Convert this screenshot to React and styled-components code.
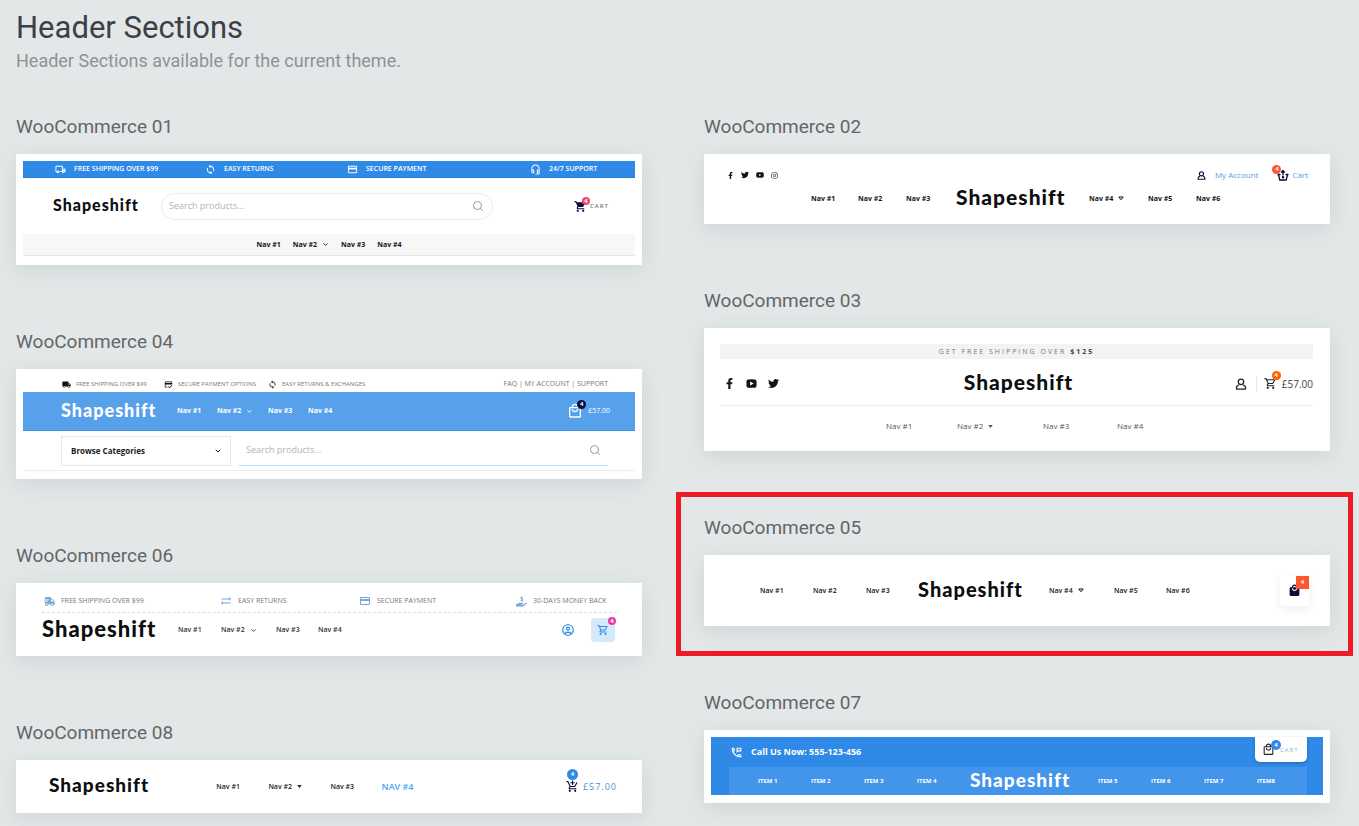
import React from "react";
import styled, { createGlobalStyle, css } from "styled-components";
import {
  MdOutlineLocalShipping, MdLoop, MdCreditCard, MdOutlineHeadsetMic, MdShoppingCart,
  MdOutlineShoppingCart, MdLocalShipping, MdCreditScore, MdOutlineLocalMall, MdLocalMall,
  MdSyncAlt, MdOutlineAccountCircle, MdAddShoppingCart, MdOutlinePermPhoneMsg,
} from "react-icons/md";
import {
  FaFacebookF, FaTwitter, FaYoutube, FaInstagram, FaShippingFast, FaHandHoldingUsd,
} from "react-icons/fa";
import { Search, ChevronDown } from "lucide-react";

const GlobalStyle = createGlobalStyle`
  *, *::before, *::after { box-sizing: border-box; }
  body {
    margin: 0;
    background: #e3e7e8;
    font-family: "Open Sans", "Noto Sans", sans-serif;
    color: #111418;
  }
  svg { display: block; flex: none; }
  a { color: inherit; text-decoration: none; }
  button { font: inherit; color: inherit; background: none; border: 0; padding: 0; cursor: pointer; }
`;

const blue = "#2e8ae6";
const navy = "#0a0a3c";

const Page = styled.main`
  padding: 10px 29px 13px 16px;
`;

const PageTitle = styled.h1`
  margin: 0;
  font: 400 31px/36px Roboto, sans-serif;
  color: #3b4048;
`;

const Intro = styled.p`
  margin: 3px 0 42px;
  font: 400 18px/24px Roboto, sans-serif;
  color: #8d9296;
`;

const Columns = styled.div`
  display: grid;
  grid-template-columns: repeat(2, minmax(0, 1fr));
  column-gap: 62px;
  align-items: start;
`;

const Column = styled.div`
  display: flex;
  flex-direction: column;
  gap: 65px;
`;

const Section = styled.section`
  position: relative;
`;

const SectionTitle = styled.h2`
  margin: 0 0 15px;
  font: 400 19px/24px Roboto, sans-serif;
  color: #626669;
`;

const Highlight = styled.div`
  position: absolute;
  inset: -24px -23px -30px -28px;
  border: 5px solid #ed1c24;
  pointer-events: none;
`;

const Card = styled.article`
  background: #fff;
  padding: ${(p) => p.$pad || "0"};
  box-shadow: 0 5px 20px rgba(60, 80, 80, 0.12);
`;

const Row = styled.div`
  display: grid;
  grid-template-columns: ${(p) => p.$cols.map((n) => `minmax(0, ${n}fr)`).join(" ")};
  align-items: center;
  height: ${(p) => p.$h}px;
  padding: ${(p) => p.$pad || "0"};
  margin: ${(p) => p.$margin || "0"};
  white-space: nowrap;
  background: ${(p) => p.$bg || "transparent"};
  color: ${(p) => p.$color || "inherit"};
  border-bottom: ${(p) => p.$line || "0"};
`;

const Group = styled.div`
  display: flex;
  align-items: center;
  justify-content: ${(p) => (p.$end ? "flex-end" : p.$center ? "center" : "flex-start")};
  gap: ${(p) => p.$gap || 0}px;
`;

const Spread = styled.div`
  display: flex;
  align-items: center;
  justify-content: space-between;
`;

const Logo = styled.a`
  padding-bottom: 3px;
  font: 900 ${(p) => p.$size}px/24px Lato, sans-serif;
  letter-spacing: 1px;
  color: ${(p) => p.$color || "#0c0e10"};
  ${(p) => p.$center && css`justify-self: center;`}
`;

const NavLink = styled.a`
  display: inline-flex;
  align-items: center;
  gap: 5px;
  font-size: ${(p) => p.$size || 7}px;
  line-height: 12px;
  font-weight: ${(p) => p.$weight || 700};
  color: ${(p) => p.$color || "inherit"};
`;

const Perk = styled.span`
  display: inline-flex;
  align-items: center;
  gap: ${(p) => p.$gap || 8}px;
  font-size: ${(p) => p.$size || 7}px;
  line-height: 10px;
  font-weight: ${(p) => p.$weight || 400};
  color: ${(p) => p.$color || "#777"};
  svg { color: ${(p) => p.$icon || "inherit"}; }
`;

const CartButton = styled.button`
  position: relative;
  display: inline-flex;
  align-items: center;
  gap: ${(p) => p.$gap || 4}px;
  color: ${(p) => p.$color || navy};
`;

const CartLabel = styled.span`
  font-size: ${(p) => p.$size || 6}px;
  line-height: 12px;
  letter-spacing: ${(p) => p.$track || 0}px;
  font-weight: ${(p) => p.$weight || 400};
  color: ${(p) => p.$color || "#777"};
`;

const Badge = styled.span`
  position: absolute;
  left: ${(p) => p.$x}px;
  top: ${(p) => p.$y}px;
  width: ${(p) => p.$size}px;
  height: ${(p) => p.$size}px;
  border-radius: ${(p) => (p.$square ? "0" : "50%")};
  background: ${(p) => p.$bg};
  color: #fff;
  font-size: 6px;
  font-weight: 700;
  line-height: ${(p) => p.$size}px;
  text-align: center;
`;

const PillSearch = styled.form`
  display: flex;
  align-items: center;
  height: 27px;
  padding: 0 8px 0 7px;
  border: 1px solid #ececec;
  border-radius: 14px;
  color: #999;
`;

const LineSearch = styled(PillSearch)`
  height: 30px;
  padding: 0 7px;
  margin-left: 8px;
  border: 0;
  border-bottom: 1px solid #b9dcf6;
  border-radius: 0;
`;

const SearchInput = styled.input`
  flex: 1;
  min-width: 0;
  border: 0;
  padding: 0;
  outline: 0;
  background: none;
  font: 400 9px/14px "Open Sans", sans-serif;
  &::placeholder { color: #b4b4b4; opacity: 1; }
`;

const SelectBox = styled.label`
  position: relative;
  display: block;
  svg { position: absolute; right: 9px; top: 11px; pointer-events: none; }
`;

const Select = styled.select`
  display: block;
  width: 100%;
  height: 30px;
  padding: 0 9px;
  appearance: none;
  border: 1px solid #e6e6e6;
  border-radius: 0;
  background: #fff;
  color: #222;
  font: 700 8px/12px "Open Sans", sans-serif;
`;

const Announcement = styled.p`
  margin: 0;
  height: 15px;
  background: #f3f3f3;
  text-align: center;
  font-size: 7px;
  line-height: 15px;
  letter-spacing: 2px;
  color: #777;
  b { color: #444; }
`;

const Divider = styled.span`
  width: 1px;
  height: 16px;
  background: #e6e6e6;
  margin: 0 7px 0 9px;
`;

const BagBox = styled(CartButton)`
  justify-content: center;
  width: 29px;
  height: 31px;
  border-radius: 2px;
  background: #fff;
  box-shadow: 0 3px 10px rgba(0, 0, 0, 0.07);
`;

const TintBox = styled(CartButton)`
  justify-content: center;
  width: 24px;
  height: 24px;
  border-radius: 4px;
  background: #d6e9fb;
`;

const CartTab = styled(CartButton)`
  align-self: start;
  justify-self: end;
  height: 25px;
  width: 52px;
  padding: 0 7px;
  border-radius: 0 0 5px 5px;
  background: #fff;
  box-shadow: 0 1px 3px rgba(0, 0, 0, 0.25);
`;

const Phone = styled.a`
  display: inline-flex;
  align-items: center;
  gap: 8px;
  font-size: 9px;
  line-height: 14px;
  font-weight: 700;
`;

const BluePanel = styled.div`
  background: ${blue};
  color: #fff;
  padding: 0 16px 0 18px;
`;

const UserIcon = ({ size = 12, stroke = 2.5 }) => (
  <svg width={size} height={size} viewBox="0 0 24 24" fill="none" stroke="currentColor" strokeWidth={stroke} strokeLinejoin="round">
    <circle cx="12" cy="7.500" r="5.500" />
    <path d="M8 14 Q3 15 3 19 V22 H21 V19 Q21 15 16 14" />
  </svg>
);

const BasketIcon = () => (
  <svg width="12" height="12" viewBox="0 0 24 24" fill="none" stroke="currentColor" strokeWidth="2.6" strokeLinejoin="round">
    <path d="M1 11 H7 M17 11 H23 M3 11 L5.500 22 H18.500 L21 11" />
    <path d="M12 3 V13 M8.500 7 L12 3 L15.500 7" />
    <circle cx="12" cy="16.500" r="1.200" fill="currentColor" />
  </svg>
);

const YoutubeTile = ({ size }) => (
  <svg width={size} height={size} viewBox="0 0 24 24">
    <path fill="currentColor" fillRule="evenodd" d="M5 3 Q12 2 19 3 Q23 3 23 7 V17 Q23 21 19 21 Q12 22 5 21 Q1 21 1 17 V7 Q1 3 5 3 Z M9 7.500 V16.500 L17 12 Z" />
  </svg>
);

const Caret = ({ type }) => {
  if (type === "hollow")
    return (
      <svg width="6" height="5" viewBox="0 0 12 10" fill="none" stroke="currentColor" strokeWidth="2">
        <path d="M1.500 2 H10.500 L6 7.500 Z" />
      </svg>
    );
  if (type === "solid")
    return (
      <svg width="5" height="3" viewBox="0 0 6 4"><path fill="currentColor" d="M0 0 H6 L3 4 Z" /></svg>
    );
  return <ChevronDown size={7} strokeWidth={3} />;
};

const Nav = ({ n, caret, ...rest }) => (
  <NavLink href="#" {...rest}>
    Nav #{n}
    {caret && <Caret type={caret} />}
  </NavLink>
);

const Social = ({ icon: Icon, size, label }) => (
  <a href="#" aria-label={label}><Icon size={size} /></a>
);

function Woo01() {
  const perk = { $color: "#fff", $weight: 600 };
  return (
    <Card $pad="7px 7px 9px">
      <Row $h={17} $bg={blue} $pad="0 38px 0 32px" $cols={[150, 142, 183, 67]} $line="1px solid #2179d3">
        <Perk {...perk}><MdOutlineLocalShipping size={11} />FREE SHIPPING OVER $99</Perk>
        <Perk {...perk}><MdLoop size={11} />EASY RETURNS</Perk>
        <Perk {...perk}><MdCreditCard size={11} />SECURE PAYMENT</Perk>
        <Perk {...perk}><MdOutlineHeadsetMic size={11} />24/7 SUPPORT</Perk>
      </Row>
      <Row $h={56} $pad="0 26px 0 30px" $cols={[108, 332, 116]}>
        <Logo href="#" $size={16}>Shapeshift</Logo>
        <PillSearch>
          <SearchInput aria-label="Search products" placeholder="Search products..." />
          <button type="button" aria-label="Search"><Search size={12} /></button>
        </PillSearch>
        <Group $end>
          <CartButton $gap={3}>
            <MdShoppingCart size={13} />
            <Badge $x={8} $y={-3} $size={8} $bg="#f3476b">4</Badge>
            <CartLabel $track={1} $weight={600}>CART</CartLabel>
          </CartButton>
        </Group>
      </Row>
      <Row $h={22} $bg="#f7f7f7" $cols={[1]} $line="1px solid #e6e6e6">
        <Group as="nav" $center $gap={12}>
          <Nav n={1} /><Nav n={2} caret="line" /><Nav n={3} /><Nav n={4} />
        </Group>
      </Row>
    </Card>
  );
}

function Woo04() {
  const perk = { $size: 6, $gap: 5, $icon: "#111" };
  return (
    <Card $pad="7px 7px 8px">
      <Row $h={16} $pad="0 27px 0 39px" $cols={[102, 104, 140, 200]}>
        <Perk {...perk}><MdLocalShipping size={9} />FREE SHIPPING OVER $99</Perk>
        <Perk {...perk}><MdCreditScore size={9} />SECURE PAYMENT OPTIONS</Perk>
        <Perk {...perk}><MdLoop size={9} />EASY RETURNS &amp; EXCHANGES</Perk>
        <Group $end>
          <Perk><span><a href="#">FAQ</a> | <a href="#">MY ACCOUNT</a> | <a href="#">SUPPORT</a></span></Perk>
        </Group>
      </Row>
      <Row $h={39} $bg="#57a1eb" $color="#fff" $pad="0 25px 0 38px" $cols={[116, 40, 51, 40, 302]} $line="1px solid #3f92e4">
        <Logo href="#" $size={18} $color="#fff">Shapeshift</Logo>
        <Nav n={1} /><Nav n={2} caret="line" /><Nav n={3} />
        <Spread>
          <Nav n={4} />
          <CartButton $color="#fff" $gap={5}>
            <MdOutlineLocalMall size={16} />
            <Badge $x={10} $y={-3} $size={9} $bg={navy}>4</Badge>
            <CartLabel $size={7} $color="#fff">£57.00</CartLabel>
          </CartButton>
        </Spread>
      </Row>
      <Row $h={40} $pad="0 27px 0 38px" $cols={[170, 377]} $line="1px solid #ededed">
        <SelectBox>
          <Select aria-label="Browse Categories" defaultValue="all">
            <option value="all">Browse Categories</option>
          </Select>
          <ChevronDown size={8} strokeWidth={3} />
        </SelectBox>
        <LineSearch>
          <SearchInput aria-label="Search products" placeholder="Search products..." />
          <button type="button" aria-label="Search"><Search size={12} /></button>
        </LineSearch>
      </Row>
    </Card>
  );
}

function Woo06() {
  const perk = { $gap: 6, $icon: "#79a7d8" };
  return (
    <Card $pad="7px 25px 11px 26px">
      <Row $h={23} $pad="0 6px 0 2px" $cols={[176, 139, 157, 95]} $line="1px dashed #dedede">
        <Perk {...perk}><FaShippingFast size={11} />FREE SHIPPING OVER $99</Perk>
        <Perk {...perk}><MdSyncAlt size={12} />EASY RETURNS</Perk>
        <Perk {...perk}><MdCreditCard size={12} />SECURE PAYMENT</Perk>
        <Perk {...perk}><FaHandHoldingUsd size={11} />30-DAYS MONEY BACK</Perk>
      </Row>
      <Row $h={30} $margin="2px 0 0" $pad="0 2px 0 0" $cols={[136, 43, 55, 42, 297]} $color="#333">
        <Logo href="#" $size={22}>Shapeshift</Logo>
        <Nav n={1} $weight={600} /><Nav n={2} $weight={600} caret="line" /><Nav n={3} $weight={600} />
        <Spread>
          <Nav n={4} $weight={600} />
          <Group $gap={16}>
            <CartButton aria-label="Account" $color={blue}><MdOutlineAccountCircle size={14} /></CartButton>
            <TintBox aria-label="Cart" $color={blue}>
              <MdOutlineShoppingCart size={12} />
              <Badge $x={17} $y={-1} $size={8} $bg="#e83aa5">4</Badge>
            </TintBox>
          </Group>
        </Spread>
      </Row>
    </Card>
  );
}

function Woo08() {
  return (
    <Card>
      <Row $h={53} $pad="0 25px 0 33px" $cols={[167, 52, 62, 51, 235]} $color="#222">
        <Logo href="#" $size={19}>Shapeshift</Logo>
        <Nav n={1} $weight={600} /><Nav n={2} $weight={600} caret="solid" /><Nav n={3} $weight={600} />
        <Spread>
          <NavLink href="#" $size={9} $weight={600} $color="#4aa3ec">NAV #4</NavLink>
          <CartButton>
            <MdAddShoppingCart size={13} />
            <Badge $x={1} $y={-11} $size={11} $bg={blue}>4</Badge>
            <CartLabel $size={9} $track={1} $color="#4a90e2">£57.00</CartLabel>
          </CartButton>
        </Spread>
      </Row>
    </Card>
  );
}

function Woo02() {
  return (
    <Card $pad="11px 0 13px">
      <Row $h={20} $pad="0 22px 0 23px" $cols={[1, 1]}>
        <Group $gap={7}>
          <Social icon={FaFacebookF} size={7} label="Facebook" />
          <Social icon={FaTwitter} size={8} label="Twitter" />
          <Social icon={FaYoutube} size={8} label="YouTube" />
          <Social icon={FaInstagram} size={7} label="Instagram" />
        </Group>
        <Group $end $gap={19}>
          <CartButton $gap={9}>
            <UserIcon size={9} stroke={3} />
            <CartLabel $size={8} $color="#5b9be8">My Account</CartLabel>
          </CartButton>
          <CartButton $gap={3}>
            <BasketIcon />
            <Badge $x={-5} $y={-4} $size={9} $bg="#ff5630">4</Badge>
            <CartLabel $size={8} $color="#5b9be8">Cart</CartLabel>
          </CartButton>
        </Group>
      </Row>
      <Row as="nav" $h={26} $pad="0 0 0 107px" $cols={[47, 48, 50, 133, 59, 48, 134]}>
        <Nav n={1} /><Nav n={2} /><Nav n={3} />
        <Logo href="#" $size={21}>Shapeshift</Logo>
        <Nav n={4} caret="hollow" /><Nav n={5} /><Nav n={6} />
      </Row>
    </Card>
  );
}

function Woo03() {
  return (
    <Card $pad="16px 17px 5px 16px">
      <Announcement>GET FREE SHIPPING OVER <b>$125</b></Announcement>
      <Row $h={47} $pad="3px 0 0 4px" $cols={[1, 1, 1]} $line="1px solid #ececec">
        <Group $gap={11}>
          <Social icon={FaFacebookF} size={11} label="Facebook" />
          <Social icon={YoutubeTile} size={11} label="YouTube" />
          <Social icon={FaTwitter} size={11} label="Twitter" />
        </Group>
        <Logo href="#" $size={21} $center>Shapeshift</Logo>
        <Group $end>
          <CartButton aria-label="Account" $color="#222"><UserIcon size={12} /></CartButton>
          <Divider />
          <CartButton $color="#222" $gap={5}>
            <MdOutlineShoppingCart size={13} />
            <Badge $x={8} $y={-6} $size={9} $bg="#ff6200">4</Badge>
            <CartLabel $size={10} $color="#444">£57.00</CartLabel>
          </CartButton>
        </Group>
      </Row>
      <Row as="nav" $h={40} $color="#555" $pad="0 0 0 166px" $cols={[71, 86, 74, 196]}>
        <Nav n={1} $size={8} $weight={400} />
        <Nav n={2} $size={8} $weight={400} caret="solid" />
        <Nav n={3} $size={8} $weight={400} />
        <Nav n={4} $size={8} $weight={400} />
      </Row>
    </Card>
  );
}

function Woo05() {
  return (
    <Card>
      <Row $h={71} $pad="0 21px 0 56px" $cols={[53, 53, 52, 131, 65, 52, 114, 29]}>
        <Nav n={1} $weight={600} /><Nav n={2} $weight={600} /><Nav n={3} $weight={600} />
        <Logo href="#" $size={20}>Shapeshift</Logo>
        <Nav n={4} $weight={600} caret="hollow" /><Nav n={5} $weight={600} /><Nav n={6} $weight={600} />
        <BagBox aria-label="Cart">
          <MdLocalMall size={13} />
          <Badge $x={16} $y={1} $size={13} $bg="#ff5630" $square>4</Badge>
        </BagBox>
      </Row>
    </Card>
  );
}

function Woo07() {
  const item = (label) => <NavLink href="#" $size={6} $weight={700} key={label}>{label}</NavLink>;
  return (
    <Card $pad="7px 7px 8px">
      <BluePanel>
        <Row $h={30} $pad="0 0 0 1px" $cols={[1, 1]}>
          <Phone href="tel:555123456">
            <MdOutlinePermPhoneMsg size={13} />Call Us Now: 555-123-456
          </Phone>
          <CartTab $color="#222" $gap={5}>
            <MdOutlineLocalMall size={13} />
            <Badge $x={16} $y={3} $size={10} $bg={blue}>4</Badge>
            <CartLabel $track={1} $color="#8fb3d6">CART</CartLabel>
          </CartTab>
        </Row>
        <Row as="nav" $h={28} $bg="#4295ea" $pad="0 0 0 29px" $cols={[53, 53, 53, 53, 128, 53, 53, 53, 50]}>
          {["ITEM 1", "ITEM 2", "ITEM 3", "ITEM 4"].map(item)}
          <Logo href="#" $size={19} $color="#fff">Shapeshift</Logo>
          {["ITEM 5", "ITEM 6", "ITEM 7", "ITEM8"].map(item)}
        </Row>
      </BluePanel>
    </Card>
  );
}

const Entry = ({ id, highlighted, children }) => (
  <Section>
    <SectionTitle>WooCommerce {id}</SectionTitle>
    {children}
    {highlighted && <Highlight />}
  </Section>
);

export default function App() {
  return (
    <>
      <GlobalStyle />
      <Page>
        <PageTitle>Header Sections</PageTitle>
        <Intro>Header Sections available for the current theme.</Intro>
        <Columns>
          <Column>
            <Entry id="01"><Woo01 /></Entry>
            <Entry id="04"><Woo04 /></Entry>
            <Entry id="06"><Woo06 /></Entry>
            <Entry id="08"><Woo08 /></Entry>
          </Column>
          <Column>
            <Entry id="02"><Woo02 /></Entry>
            <Entry id="03"><Woo03 /></Entry>
            <Entry id="05" highlighted><Woo05 /></Entry>
            <Entry id="07"><Woo07 /></Entry>
          </Column>
        </Columns>
      </Page>
    </>
  );
}
